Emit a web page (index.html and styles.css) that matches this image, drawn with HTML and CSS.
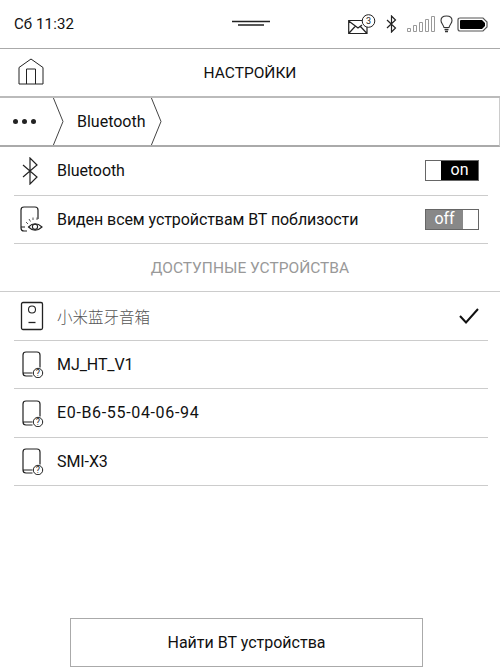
FILE: index.html
```html
<!DOCTYPE html>
<html lang="en">
<head>
    <meta charset="UTF-8">
    <meta name="viewport" content="width=device-width, initial-scale=1.0">
    <title>Настройки Bluetooth</title>
    <link rel="stylesheet" href="styles.css">
</head>
<body>
    <div class="page">
        <div class="status">
            <span class="clock">Сб 11:32</span>
            <svg class="handle" width="38" height="7" viewBox="0 0 38 7"><path d="M0 1.5H38M6 5H32" stroke="#222" stroke-width="1.4" fill="none"/></svg>
            <div class="tray">
                <svg class="tray-wide" width="29" height="22" viewBox="0 0 29 22"><path d="M0.7 7.5H19V20.5H0.7ZM0.7 8L10 15L14 12M0.7 20.5L7.5 13M19 20.5L12 13" fill="none" stroke="#222" stroke-width="1.2"/><circle cx="20.5" cy="8" r="6.3" fill="#fff" stroke="#222" stroke-width="1"/><text x="20.5" y="11" font-size="9" text-anchor="middle" class="svgtext">3</text></svg>
                <svg class="tray-wide" width="11" height="18" viewBox="0 0 11 18"><path d="M1 5L9.5 13L5.5 17V1L9.5 5L1 13" fill="none" stroke="#222" stroke-width="1.2"/></svg>
                <svg class="tray-narrow" width="30" height="17" viewBox="0 0 30 17"><path d="M1.5 12.5h3v3h-3ZM7.5 9.500h3v6h-3ZM13.5 6.500h3v9h-3ZM19.500 3.500h3v12h-3ZM25.500 0.500h3v15h-3Z" fill="none" stroke="#999" stroke-width="1"/></svg>
                <svg class="tray-narrow" width="13" height="18" viewBox="0 0 13 18"><path d="M4 12.5C3.500 9.500 1 8.500 1 5.500C1 2.800 3.300 1 6.500 1C9.700 1 12 2.800 12 5.500C12 8.500 9.500 9.500 9 12.5Z" fill="none" stroke="#333" stroke-width="1.1"/><path d="M4.500 14.5H8.500M5 16.5H8" stroke="#333" stroke-width="1.5"/></svg>
                <svg width="31" height="15" viewBox="0 0 31 15"><path d="M3 1H26L30 5V10L26 14H3Q1 14 1 12V3Q1 1 3 1Z" fill="#fff" stroke="#555" stroke-width="1.2"/><path d="M4 3H25L28 6V9L25 12H4Q3 12 3 11V4Q3 3 4 3Z" fill="#000"/></svg>
            </div>
        </div>

        <div class="header">
            <svg class="home" width="26" height="27" viewBox="0 0 26 27"><path d="M1 9.500L13 1L25 9.500V26H1Z M8.500 26V11H17.500V26" fill="none" stroke="#222" stroke-width="1"/></svg>
            <span class="title">НАСТРОЙКИ</span>
        </div>

        <div class="crumbs">
            <div class="dots"><i></i><i></i><i></i></div>
            <svg class="chevron" width="12" height="49" viewBox="0 0 12 49"><path d="M1 0L11 24.500L1 49" fill="none" stroke="#444" stroke-width="1"/></svg>
            <span class="crumb">Bluetooth</span>
            <svg class="chevron" width="12" height="49" viewBox="0 0 12 49"><path d="M1 0L11 24.500L1 49" fill="none" stroke="#444" stroke-width="1"/></svg>
        </div>

        <div class="list">
            <div class="row">
                <svg class="icon" width="32" height="28" viewBox="0 0 32 28"><path d="M9 8L23 20L16 27V1L23 8L9 20" fill="none" stroke="#222" stroke-width="1.2"/></svg>
                <span class="label">Bluetooth</span>
                <div class="toggle on"><span class="knob"></span><span class="state">on</span></div>
            </div>
            <div class="row">
                <svg class="icon" width="32" height="28" viewBox="0 0 32 28"><path d="M13 26H10Q7 26 7 23V5Q7 2 10 2H21Q24 2 24 5V14M7 22H11" fill="none" stroke="#222" stroke-width="1.2"/><path d="M14.500 22Q21 15.500 28 22Q21 28.500 14.500 22Z" fill="#fff" stroke="#222" stroke-width="1.1"/><circle cx="21" cy="21.800" r="2.600" fill="none" stroke="#222" stroke-width="1.1"/><path d="M12 17L14 19M15 14L16.500 16.500M19 12.500V15M23 12.500V15" stroke="#555" stroke-width="1" fill="none"/></svg>
                <span class="label">Виден всем устройствам BT поблизости</span>
                <div class="toggle off"><span class="state">off</span><span class="knob"></span></div>
            </div>
        </div>

        <div class="section">ДОСТУПНЫЕ УСТРОЙСТВА</div>

        <div class="list">
            <div class="row">
                <svg class="icon" width="32" height="30" viewBox="0 0 32 30"><rect x="7.500" y="1.500" width="21" height="27" rx="1.500" fill="none" stroke="#222" stroke-width="1.3"/><circle cx="18" cy="8.500" r="3.500" fill="none" stroke="#222" stroke-width="1.1"/><path d="M14.500 21.500H21.500" stroke="#222" stroke-width="1.3"/></svg>
                <span class="label cjk">小米蓝牙音箱</span>
                <svg class="check" width="20" height="16" viewBox="0 0 20 16"><path d="M1 8L7 14.500L19 1" fill="none" stroke="#111" stroke-width="2"/></svg>
            </div>
            <div class="row">
                <svg class="icon" width="32" height="28" viewBox="0 0 32 28"><use href="#unknown"/></svg>
                <span class="label">MJ_HT_V1</span>
            </div>
            <div class="row">
                <svg class="icon" width="32" height="28" viewBox="0 0 32 28"><use href="#unknown"/></svg>
                <span class="label mac">E0-B6-55-04-06-94</span>
            </div>
            <div class="row">
                <svg class="icon" width="32" height="28" viewBox="0 0 32 28"><use href="#unknown"/></svg>
                <span class="label">SMI-X3</span>
            </div>
        </div>

        <div class="footer">
            <button class="scan">Найти BT устройства</button>
        </div>
    </div>

    <svg class="defs" width="0" height="0">
        <defs>
            <g id="unknown">
                <path d="M18.500 26H12Q9 26 9 23V5Q9 2 12 2H23Q26 2 26 5V17.500M9 23H18.500" fill="none" stroke="#222" stroke-width="1.2"/>
                <circle cx="24" cy="23" r="4.700" fill="#fff" stroke="#222" stroke-width="1"/>
                <text x="24" y="26.200" font-size="9" text-anchor="middle" class="svgtext">?</text>
            </g>
        </defs>
    </svg>
</body>
</html>
```

FILE: styles.css
```css
* {
    box-sizing: border-box;
}
body {
    margin: 0;
    font-family: Roboto, "Noto Sans CJK SC", sans-serif;
    background: #fff;
    color: #111;
    overflow: hidden;
}
.page {
    width: 500px;
    height: 667px;
    display: flex;
    flex-direction: column;
}
.svgtext {
    font-family: Roboto, sans-serif;
    fill: #222;
}
.defs {
    display: block;
}
.status {
    flex: none;
    height: 49px;
    border-bottom: 1px solid #aaa;
    display: flex;
    align-items: center;
    padding: 0 12px 0 14px;
    position: relative;
}
.clock {
    font-size: 15px;
    letter-spacing: 0.1px;
}
.handle {
    position: absolute;
    left: 232px;
    top: 20px;
}
.tray {
    margin-left: auto;
    display: flex;
    align-items: center;
}
.tray-wide {
    margin-right: 9px;
}
.tray-narrow {
    margin-right: 4px;
}
.header {
    flex: none;
    height: 49px;
    border-bottom: 2px solid #bbb;
    display: flex;
    align-items: center;
    justify-content: center;
    position: relative;
}
.home {
    position: absolute;
    left: 18px;
    top: 9px;
}
.title {
    font-size: 15.5px;
}
.crumbs {
    flex: none;
    height: 49px;
    border-bottom: 2px solid #aaa;
    border-right: 1px solid #ccc;
    display: flex;
    align-items: center;
    overflow: hidden;
}
.dots {
    width: 52px;
    padding-left: 13px;
    display: flex;
    gap: 4px;
}
.dots i {
    width: 5px;
    height: 5px;
    border-radius: 50%;
    background: #222;
}
.crumb {
    font-size: 16px;
    margin: 0 4px 0 13px;
}
.list {
    flex: none;
    padding: 0 12px 0 14px;
}
.row {
    height: 48.5px;
    border-bottom: 1px solid #ccc;
    display: flex;
    align-items: center;
}
.icon {
    flex: none;
}
.label {
    margin-left: 11px;
    font-size: 16px;
    letter-spacing: -0.08px;
}
.mac {
    letter-spacing: 0.66px;
}
.cjk {
    color: #555;
    font-size: 15.5px;
    letter-spacing: 0;
    font-weight: 300;
}
.toggle {
    margin-left: auto;
    margin-right: 9px;
    width: 54px;
    height: 21px;
    border: 1px solid #666;
    display: flex;
    font-size: 16px;
    line-height: 18px;
}
.knob {
    width: 15px;
    background: #fff;
}
.state {
    flex: 1;
    text-align: center;
}
.toggle.on .state {
    background: #000;
    color: #fff;
}
.toggle.off .state {
    background: #888;
    color: #fff;
}
.check {
    margin-left: auto;
    margin-right: 9px;
}
.section {
    flex: none;
    height: 48px;
    border-bottom: 1px solid #ccc;
    display: flex;
    align-items: center;
    justify-content: center;
    font-size: 15.5px;
    color: #999;
}
.footer {
    margin-top: auto;
    display: flex;
    justify-content: center;
    padding-right: 7px;
}
.scan {
    width: 353px;
    height: 49px;
    background: #fff;
    border: 1px solid #aaa;
    font-family: inherit;
    font-size: 16px;
    color: #111;
    padding: 0;
}
```
